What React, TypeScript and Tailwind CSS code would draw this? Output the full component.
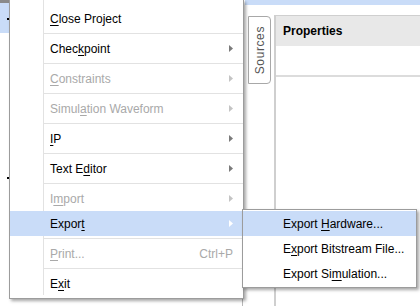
import React from "react";

type Item = {
  label: React.ReactNode;
  disabled?: boolean;
  sub?: boolean;
  active?: boolean;
  accel?: string;
  sep?: boolean;
};

function U({ c }: { c: string }) {
  return <span className="underline underline-offset-[2px]">{c}</span>;
}

const items: Item[] = [
  { label: <><U c="C" />lose Project</>, sep: true },
  { label: <>Chec<U c="k" />point</>, sub: true, sep: true },
  { label: <><U c="C" />onstraints</>, sub: true, disabled: true, sep: true },
  { label: <>Simul<U c="a" />tion Waveform</>, sub: true, disabled: true, sep: true },
  { label: <><U c="I" />P</>, sub: true, sep: true },
  { label: <>Text E<U c="d" />itor</>, sub: true, sep: true },
  { label: <>I<U c="m" />port</>, sub: true, disabled: true },
  { label: <>Expor<U c="t" /></>, sub: true, active: true, sep: true },
  { label: <><U c="P" />rint...</>, disabled: true, accel: "Ctrl+P", sep: true },
  { label: <>E<U c="x" />it</> },
];

function Arrow({ color }: { color: string }) {
  return (
    <svg width="4" height="7" viewBox="0 0 4 7">
      <path d="M0 0L4 3.5L0 7Z" fill={color} />
    </svg>
  );
}

export default function App() {
  return (
    <div className="relative w-[420px] h-[306px] overflow-hidden bg-white text-[12px] text-black" style={{ fontFamily: '"Liberation Sans", Arial, sans-serif' }}>
      {/* background */}
      <div className="flex h-full">
        <div className="w-[243px] border-r border-[#b8b8b8] flex flex-col">
          <div className="h-[3px] w-[9px] bg-[#8a8a8a]" />
          <div className="h-[30px] w-[9px] bg-[#c9dcf8] relative">
            <div className="absolute right-0 top-[15px] w-[2px] h-[2px] bg-black" />
          </div>
          <div className="h-[144px]" />
          <div className="h-[2px] w-[9px] flex justify-end">
            <div className="w-[2px] h-[2px] bg-black" />
          </div>
        </div>
        <div className="flex-1 flex flex-col">
          <div className="h-[5px] ml-[2px] bg-[#c9dcf8]" />
          <div className="flex mt-[10px] flex-1">
            <div className="ml-[5px] mt-[1px] w-[23px] h-[68px] border border-[#a8a8a8] rounded-r-[4px] flex items-center justify-center">
              <span className="[writing-mode:vertical-rl] rotate-180 text-[#555] tracking-[0.6px]">Sources</span>
            </div>
            <div className="ml-[3px] flex-1 border-l-2 border-t border-[#cfcfcf] flex flex-col">
              <div className="h-[30px] bg-[#e8e8e8] flex items-center pl-[7px] font-bold">Properties</div>
              <div className="h-[31px] border-b-2 border-[#dcdcdc]" />
            </div>
          </div>
        </div>
      </div>

      {/* main menu */}
      <div className="absolute left-[9px] top-0 w-[235px] h-[299px] bg-white border-x border-b border-[#9c9c9c] shadow-[2px_2px_3px_rgba(0,0,0,0.35)]">
        <div className="relative pt-[6px]">
          <div className="absolute left-[33px] top-0 h-[295px] w-px bg-[#e2e2e2]" />
          {items.map((it, i) => (
            <div key={i}>
              <div className={`relative h-[25px] flex items-center pl-[40px] pr-[10px] ${it.active ? "bg-[#c9dcf8]" : ""} ${it.disabled ? "text-[#a9a9a9]" : "text-black"}`}>
                <span className="flex-1 whitespace-nowrap">{it.label}</span>
                {it.sub && <Arrow color={it.active ? "#ffffff" : it.disabled ? "#c4c4c4" : "#7a7a7a"} />}
                {it.accel && <span className="text-[#a9a9a9]">{it.accel}</span>}
              </div>
              {it.sep && (
                <div className="h-[5px] flex items-center pl-[34px]">
                  <div className="h-px w-full bg-[#e2e2e2]" />
                </div>
              )}
            </div>
          ))}
        </div>
      </div>

      {/* submenu */}
      <div className="absolute left-[242px] top-[209px] w-[175px] bg-white border border-[#9c9c9c] pt-px pb-[1px] shadow-[2px_2px_3px_rgba(0,0,0,0.35)]">
        <div className="h-[25px] flex items-center pl-[40px] bg-[#c9dcf8]">
          <span>Export <U c="H" />ardware...</span>
        </div>
        <div className="h-[25px] flex items-center pl-[40px]">
          <span>E<U c="x" />port Bitstream File...</span>
        </div>
        <div className="h-[25px] flex items-center pl-[40px]">
          <span>Export Si<U c="m" />ulation...</span>
        </div>
      </div>
    </div>
  );
}
